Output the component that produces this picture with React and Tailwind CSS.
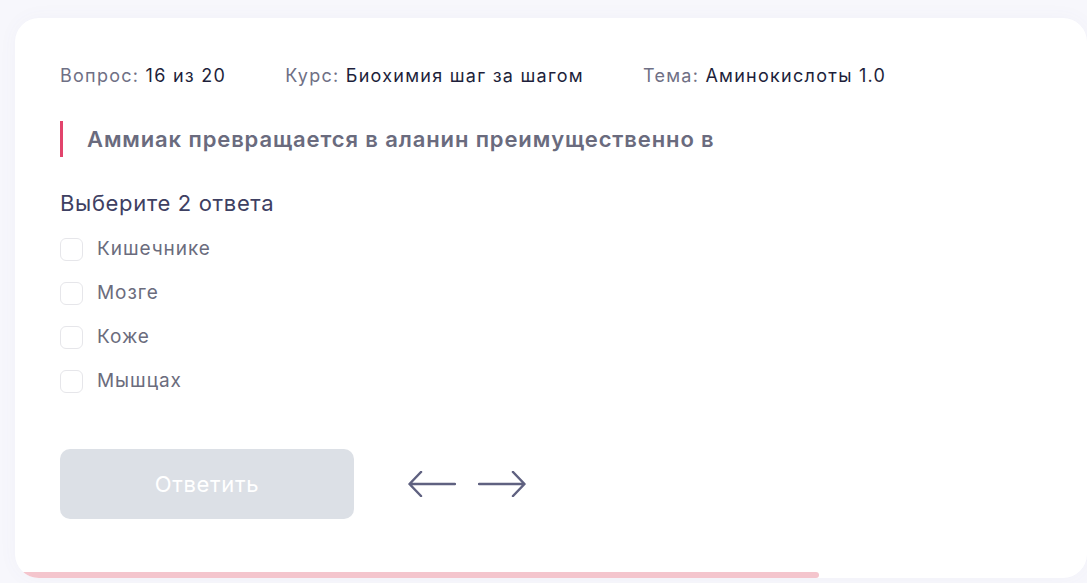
import React from 'react';

const options = ['Кишечнике', 'Мозге', 'Коже', 'Мышцах'];

function Meta({ label, value }) {
  return (
    <span>
      <span className="text-[#6f7085]">{label}: </span>
      <span className="text-[#1e1f3b]">{value}</span>
    </span>
  );
}

export default function App() {
  return (
    <div className="min-h-screen bg-[#f7f7fc] pt-[18px] pl-[15px] font-['Inter',sans-serif]">
      <div className="relative h-[560px] w-[1072px] overflow-hidden rounded-[24px] bg-white shadow-[0_0_20px_rgba(90,90,160,0.04)]">
        <div className="px-[45px] pt-[45px]">
          {/* meta row */}
          <div className="flex gap-[59px] text-[18px] leading-[26px] tracking-[0.07em]">
            <Meta label="Вопрос" value="16 из 20" />
            <Meta label="Курс" value="Биохимия шаг за шагом" />
            <Meta label="Тема" value="Аминокислоты 1.0" />
          </div>

          {/* question */}
          <div className="mt-[32px] flex h-[36px] items-center border-l-[3px] border-[#e2446c] pl-[24px]">
            <h2 className="text-[22px] font-semibold tracking-[0.04em] text-[#6a6b7e]">
              Аммиак превращается в аланин преимущественно в
            </h2>
          </div>

          <p className="mt-[32px] text-[22px] leading-[28px] tracking-[0.03em] text-[#3e4062]">Выберите 2 ответа</p>

          <div className="mt-[10px] flex flex-col">
            {options.map((o) => (
              <label key={o} className="flex h-[44px] items-center gap-[14px]">
                <span className="h-[23px] w-[23px] shrink-0 rounded-[6px] border border-[#e6e6ea] bg-white" />
                <span className="text-[19px] tracking-[0.05em] text-[#6b6c7d]">{o}</span>
              </label>
            ))}
          </div>

          {/* actions */}
          <div className="mt-[46px] flex items-center">
            <button className="h-[70px] w-[294px] rounded-[10px] bg-[#dce0e6] text-[22px] tracking-[0.03em] text-white">
              Ответить
            </button>
            <div className="ml-[54px] flex items-center gap-[22px] text-[#5f6180]">
              <svg width="48" height="26" viewBox="0 0 48 26" fill="none" stroke="currentColor" strokeWidth="2.5" strokeLinecap="round" strokeLinejoin="round">
                <path d="M47 13H2M13 1L1.5 13 13 25" />
              </svg>
              <svg width="48" height="26" viewBox="0 0 48 26" fill="none" stroke="currentColor" strokeWidth="2.5" strokeLinecap="round" strokeLinejoin="round">
                <path d="M1 13h45M35 1l11.5 12L35 25" />
              </svg>
            </div>
          </div>
        </div>

        {/* progress */}
        <div className="absolute bottom-0 left-0 h-[6px] w-[75%] rounded-r-full bg-[#f4c5cd]" />
      </div>
    </div>
  );
}
